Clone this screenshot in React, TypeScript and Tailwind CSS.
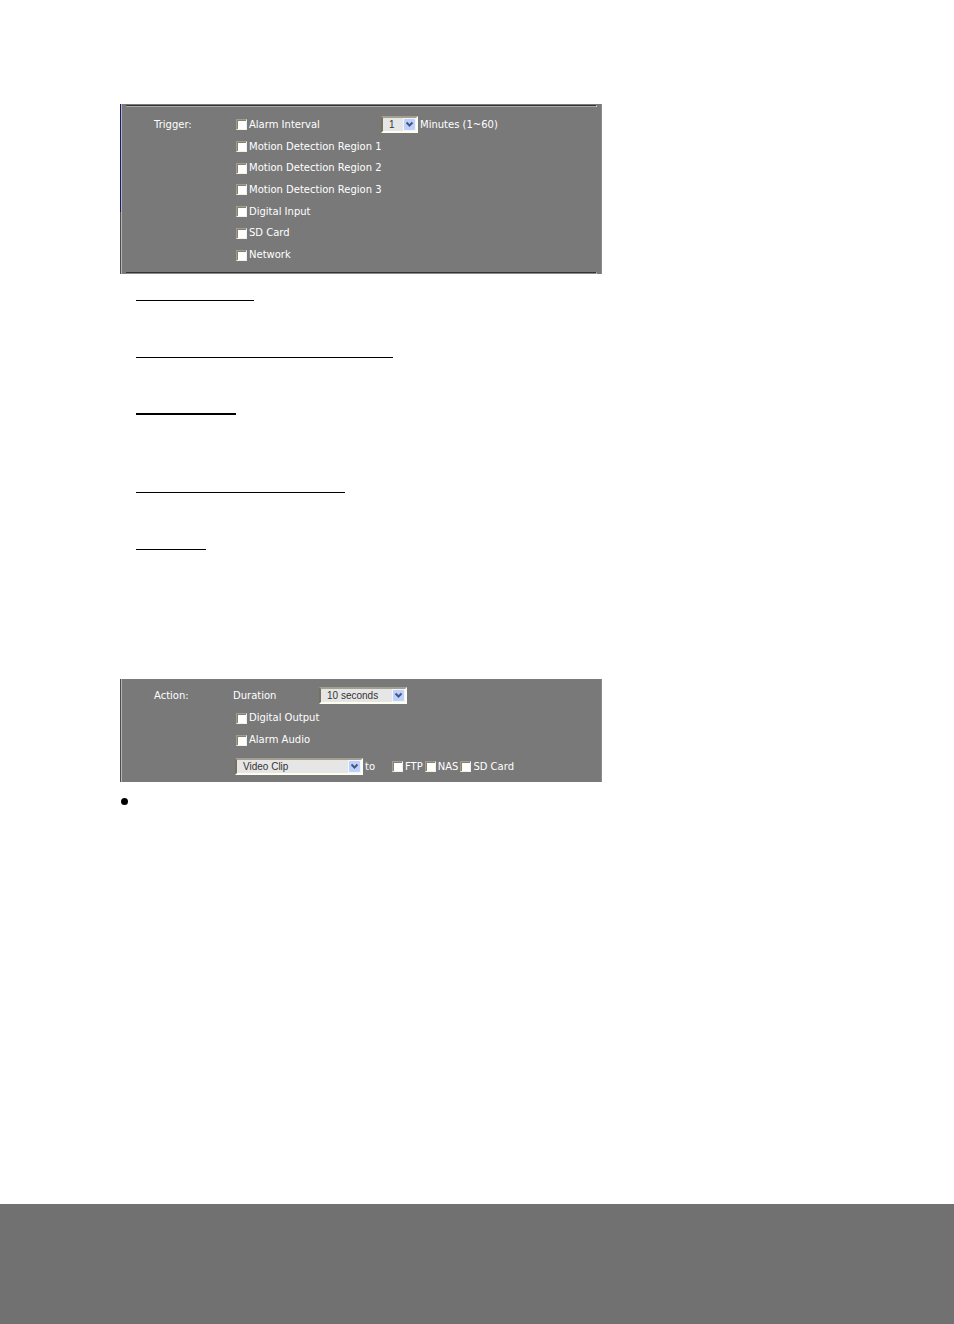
import { useId } from "react";

function Check({ label }: { label: string }) {
  const id = useId();
  return (
    <div className="flex items-center gap-[2px]">
      <input
        id={id}
        type="checkbox"
        className="size-[11px] shrink-0 appearance-none border border-t-[#a09d90] border-r-[#f2f1e4] border-b-[#f2f1e4] border-l-[#a09d90] bg-white shadow-[inset_1px_1px_0_#85816f] checked:bg-[#3a5a9a]"
      />
      <label htmlFor={id} className="whitespace-nowrap">
        {label}
      </label>
    </div>
  );
}

type PickProps = { label: string; options: string[]; className: string };

function Pick({ label, options, className }: PickProps) {
  return (
    <div className={`relative h-[17px] shrink-0 ${className}`}>
      <select
        aria-label={label}
        className="block h-full w-full appearance-none border-2 border-t-[#a3a08f] border-r-[#fdfdf0] border-b-[#fdfdf0] border-l-[#77725f] bg-[#e6e6e6] pl-[6px] font-['Liberation_Sans',sans-serif] text-[10px] leading-[13px] text-[#333]"
      >
        {options.map((option) => (
          <option key={option}>{option}</option>
        ))}
      </select>
      <svg
        aria-hidden="true"
        viewBox="0 0 13 13"
        className="pointer-events-none absolute top-[2px] right-[2px] size-[13px]"
      >
        <rect width="13" height="13" fill="#f2f5ff" />
        <rect x="1" y="1" width="11" height="11" rx="1" fill="#bfd1fb" />
        <path d="M3.5 4.5 6.5 7.5 9.5 4.5" fill="none" stroke="#445886" strokeWidth="2" />
      </svg>
    </div>
  );
}

const conditions = [
  "Motion Detection Region 1",
  "Motion Detection Region 2",
  "Motion Detection Region 3",
  "Digital Input",
  "SD Card",
  "Network",
];

export default function App() {
  return (
    <div className="flex min-h-screen flex-col bg-white font-['DejaVu_Sans',sans-serif] text-[10px] leading-[14px] text-white">
      <main className="flex-1 pt-[104px] pr-4 pb-16 pl-[120px]">
        <section className="flex w-full max-w-[482px] border-r border-[#8b8b8b] bg-[#797979]">
          <div className="flex w-[2px] shrink-0 flex-col">
            <div className="h-[108px] border-r border-l border-r-[#b5b5b5] border-l-[#1a1a78]" />
            <div className="flex-1 border-r border-l border-r-[#b5b5b5] border-l-[#4d4d4d]" />
          </div>
          <div className="flex-1 pt-px pr-1 pl-1">
            <div className="h-[2px] border-t border-r border-b border-t-[#333] border-r-white border-b-[#a8a8a8]" />
            <div className="flex pt-[7px] pb-[6px] pl-7">
              <h2 className="w-[82px] shrink-0 pt-1">Trigger:</h2>
              <div className="grid h-[152px] flex-1 grid-rows-7 items-center">
                <div className="flex items-center">
                  <div className="w-[145px]">
                    <Check label="Alarm Interval" />
                  </div>
                  <Pick label="Interval in minutes" options={["1", "5", "10", "30", "60"]} className="w-[37px]" />
                  <span className="pl-[2px] whitespace-nowrap">Minutes (1~60)</span>
                </div>
                {conditions.map((condition) => (
                  <Check key={condition} label={condition} />
                ))}
              </div>
            </div>
            <div className="h-[2px] border-t border-r border-b border-t-[#333] border-r-white border-b-[#8b8b8b]" />
          </div>
        </section>

        <div className="flex flex-col pl-4">
          <hr className="mt-[26px] w-[118px] border-black" />
          <hr className="mt-14 w-[257px] border-black" />
          <hr className="mt-[55px] w-[100px] border-t-2 border-black" />
          <hr className="mt-[77px] w-[209px] border-black" />
          <hr className="mt-14 w-[70px] border-black" />
        </div>

        <section className="mt-[129px] flex w-full max-w-[482px] border-r border-[#8b8b8b] bg-[#797979]">
          <div className="w-[2px] shrink-0 border-r border-l border-r-[#b5b5b5] border-l-[#4d4d4d]" />
          <div className="flex flex-1 pt-2 pb-[7px] pl-8">
            <h2 className="w-[79px] shrink-0 pt-[2px]">Action:</h2>
            <div className="flex flex-1 flex-col">
              <div className="flex items-center">
                <span className="w-[86px]">Duration</span>
                <Pick
                  label="Duration"
                  options={["10 seconds", "20 seconds", "30 seconds"]}
                  className="w-[88px]"
                />
              </div>
              <div className="mt-[7px] flex flex-col gap-2 pl-[3px]">
                <Check label="Digital Output" />
                <Check label="Alarm Audio" />
              </div>
              <div className="mt-[11px] flex items-center pl-[2px]">
                <Pick label="Recording type" options={["Video Clip", "Snapshot"]} className="w-[128px]" />
                <span className="w-[29px] pl-[2px]">to</span>
                <div className="flex gap-[2px]">
                  <Check label="FTP" />
                  <Check label="NAS" />
                  <Check label="SD Card" />
                </div>
              </div>
            </div>
          </div>
        </section>

        <div className="mt-4 ml-px size-[7px] rounded-full bg-black" />
      </main>
      <footer className="h-[120px] bg-[#717171]" />
    </div>
  );
}
